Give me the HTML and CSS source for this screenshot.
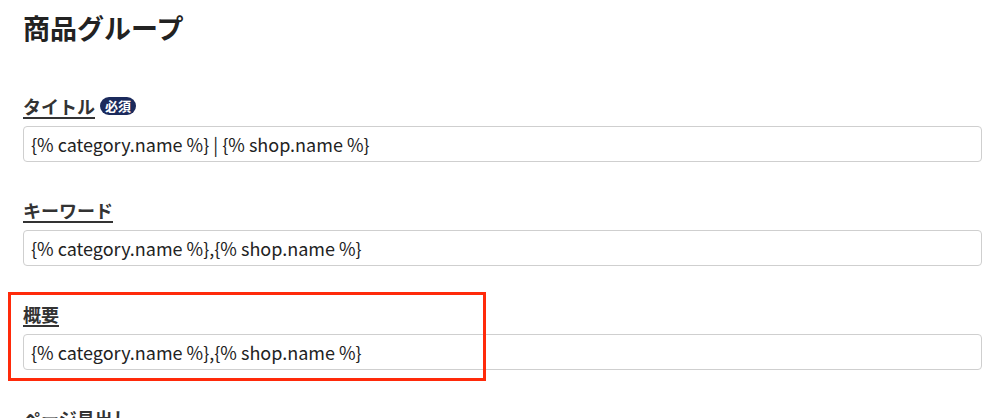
FILE: index.html
```html
<!DOCTYPE html>
<html lang="ja">
<head>
<meta charset="utf-8">
<link rel="stylesheet" href="styles.css">
</head>
<body>
<main class="page">
  <h1 class="title">商品グループ</h1>
  <div class="field">
    <div class="label-row"><span class="label">タイトル</span><span class="badge">必須</span></div>
    <div class="input">{% category.name %} | {% shop.name %}</div>
  </div>
  <div class="field">
    <div class="label-row"><span class="label">キーワード</span></div>
    <div class="input">{% category.name %},{% shop.name %}</div>
  </div>
  <div class="field highlight">
    <div class="label-row"><span class="label">概要</span></div>
    <div class="input">{% category.name %},{% shop.name %}</div>
  </div>
  <div class="field">
    <div class="label-row"><span class="label">ページ見出し</span></div>
    <div class="input">{% category.name %}</div>
  </div>
</main>
</body>
</html>
```
FILE: styles.css
```css
html, body {
  margin: 0;
  padding: 0;
  background: #fff;
  overflow: hidden;
}
.page {
  font-family: "Noto Sans CJK JP", "Noto Sans", sans-serif;
  color: #333;
  padding: 10px 18px 0 23px;
  display: flex;
  flex-direction: column;
}
.title {
  margin: 0 0 48px 0;
  font-size: 27px;
  line-height: 36px;
  font-weight: 700;
  color: #222;
}
.field {
  display: flex;
  flex-direction: column;
  margin-bottom: 36px;
}
.label-row {
  display: flex;
  align-items: center;
  gap: 5px;
  height: 24px;
  margin-bottom: 8px;
}
.label {
  font-size: 18px;
  line-height: 24px;
  font-weight: 700;
  color: #333;
  text-decoration: underline;
  text-underline-offset: 3px;
  text-decoration-thickness: 1.5px;
}
.badge {
  background: #1b2a5c;
  color: #fff;
  font-size: 13px;
  font-weight: 700;
  line-height: 18px;
  padding: 0 5px;
  border-radius: 9px;
}
.input {
  height: 36px;
  box-sizing: border-box;
  border: 1px solid #cfcfcf;
  border-radius: 4px;
  padding: 0 7px;
  display: flex;
  align-items: center;
  font-size: 18px;
  color: #222;
  white-space: nowrap;
}
.highlight {
  position: relative;
}
.highlight::after {
  content: "";
  position: absolute;
  left: -15px;
  top: -10px;
  width: 478px;
  height: 89px;
  box-sizing: border-box;
  border: 3px solid #ff2a0a;
  pointer-events: none;
}
```
